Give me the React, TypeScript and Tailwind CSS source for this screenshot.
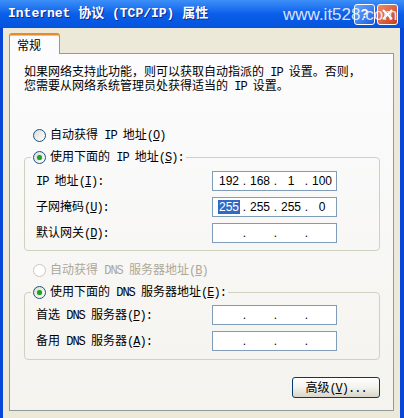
import React from 'react';

const LAT = "font-['Liberation_Mono',monospace] text-[12px] tracking-[-1px]";

// splits a label into CJK / latin runs; "&X" underlines X (mnemonic)
const Mixed: React.FC<{ text: string }> = ({ text }) => {
  const out: React.ReactNode[] = [];
  let buf = '';
  let lat = false;
  let k = 0;
  const flush = () => {
    if (!buf) return;
    out.push(
      <span key={k++} className={lat ? LAT : ''}>
        {buf}
      </span>
    );
    buf = '';
  };
  for (let i = 0; i < text.length; i++) {
    const ch = text[i];
    if (ch === '&') {
      flush();
      out.push(
        <span key={k++} className={`${LAT} underline`}>
          {text[i + 1]}
        </span>
      );
      i++;
      continue;
    }
    const isLat = ch.charCodeAt(0) < 128;
    if (isLat !== lat) {
      flush();
      lat = isLat;
    }
    buf += ch;
  }
  flush();
  return <span className="whitespace-pre">{out}</span>;
};

const Radio: React.FC<{ checked?: boolean; disabled?: boolean }> = ({ checked, disabled }) => (
  <span
    className={`w-[13px] h-[13px] shrink-0 rounded-full border flex items-center justify-center ${
      disabled ? 'border-[#cac8bb] bg-white' : 'border-[#1c5180] bg-gradient-to-br from-[#dcdcd7] to-white'
    }`}
  >
    {checked && <span className="w-[5px] h-[5px] rounded-full bg-[#21a121] shadow-[0_0_1px_#5fd35f]" />}
  </span>
);

const IpBox: React.FC<{ parts?: string[]; selectFirst?: boolean }> = ({ parts = ['', '', '', ''], selectFirst }) => (
  <div className="w-[125px] h-[20px] border border-[#7f9db9] bg-white flex items-center pl-[4px] font-['Liberation_Sans',sans-serif] text-[12px] leading-[14px]">
    {parts.map((p, i) => (
      <React.Fragment key={i}>
        <span className="w-[24px] text-center">
          {selectFirst && i === 0 ? <span className="bg-[#316ac5] text-white px-px">{p}</span> : p}
        </span>
        {i < 3 && <span className="w-[7px] text-center">.</span>}
      </React.Fragment>
    ))}
  </div>
);

const Row: React.FC<{ label: string; children: React.ReactNode }> = ({ label, children }) => (
  <div className="h-[20px] flex items-center">
    <span className="w-[176px]">
      <Mixed text={label} />
    </span>
    {children}
  </div>
);

export default function App() {
  return (
    <div className="w-[404px] h-[418px] bg-[#0846d8] flex flex-col overflow-hidden font-['Noto_Sans_CJK_SC',sans-serif]">
      {/* title bar */}
      <div className="relative h-[28px] shrink-0 bg-gradient-to-b from-[#3d8ff8] via-[#0a5ee9] to-[#0553dc] flex items-center pl-[8px] pr-[6px]">
        <span className="text-white font-bold text-[13px] font-['Liberation_Mono','Noto_Sans_CJK_SC',monospace] [text-shadow:1px_1px_#0c2a8f] whitespace-pre">
          Internet 协议 (TCP/IP) 属性
        </span>
        <div className="ml-auto flex gap-[2px]">
          <div className="w-[21px] h-[21px] rounded-[3px] border border-white bg-gradient-to-br from-[#6aa6ff] to-[#1d5ce0] flex items-center justify-center text-white font-bold text-[13px] font-['Liberation_Sans',sans-serif]">
            ?
          </div>
          <div className="w-[21px] h-[21px] rounded-[3px] border border-white bg-gradient-to-br from-[#ee8a68] to-[#c63d1a] flex items-center justify-center">
            <svg width="11" height="11" viewBox="0 0 11 11">
              <path d="M1.5 1.5 L9.5 9.5 M9.5 1.5 L1.5 9.5" stroke="white" strokeWidth="2" strokeLinecap="round" />
            </svg>
          </div>
        </div>
        <span className="absolute left-[283px] top-[2px] text-[17px] font-['Liberation_Sans',sans-serif] text-[#f0f5ff]/90 whitespace-nowrap">
          www.it528.com
        </span>
      </div>

      {/* body */}
      <div className="flex-1 ml-[3px] mr-[4px] bg-[#ece9d8] pt-[5px] px-[6px] flex flex-col">
        <div className="relative z-10 -mb-px w-[51px] h-[21px] bg-[#fcfcfe] border-x border-[#919b9c] border-t-[2px] border-t-[#e68b2c] shadow-[inset_0_1px_#ffc73c] rounded-t-[3px] pl-[7px] pt-[1px] text-[12px] leading-[17px] text-black">
          常规
        </div>

        <div className="h-[358px] border border-[#919b9c] bg-gradient-to-b from-[#fcfcfe] to-[#f4f3ee] pl-[14px] pr-[13px] flex flex-col text-[12px] leading-[14px] text-black">
          <div className="mt-[11px] flex flex-col">
            <div className="h-[14px] flex items-center">
              <Mixed text="如果网络支持此功能，则可以获取自动指派的 IP 设置。否则，" />
            </div>
            <div className="h-[14px] flex items-center">
              <Mixed text="您需要从网络系统管理员处获得适当的 IP 设置。" />
            </div>
          </div>

          <div className="mt-[35px] ml-[9px] h-[14px] flex items-center gap-[4px]">
            <Radio />
            <Mixed text="自动获得 IP 地址(&O)" />
          </div>

          <fieldset className="mt-[8px] border border-[#d0d0bf] rounded-[4px]">
            <legend className="ml-[6px] px-[2px]">
              <span className="h-[14px] flex items-center gap-[4px]">
                <Radio checked />
                <Mixed text="使用下面的 IP 地址(&S):" />
              </span>
            </legend>
            <div className="pl-[11px] pt-[7px] pb-[7px] flex flex-col gap-[6px]">
              <Row label="IP 地址(&I):">
                <IpBox parts={['192', '168', '1', '100']} />
              </Row>
              <Row label="子网掩码(&U):">
                <IpBox parts={['255', '255', '255', '0']} selectFirst />
              </Row>
              <Row label="默认网关(&D):">
                <IpBox />
              </Row>
            </div>
          </fieldset>

          <div className="mt-[12px] ml-[9px] h-[14px] flex items-center gap-[4px] text-[#aca899]">
            <Radio disabled />
            <Mixed text="自动获得 DNS 服务器地址(&B)" />
          </div>

          <fieldset className="mt-[8px] border border-[#d0d0bf] rounded-[4px]">
            <legend className="ml-[6px] px-[2px]">
              <span className="h-[14px] flex items-center gap-[4px]">
                <Radio checked />
                <Mixed text="使用下面的 DNS 服务器地址(&E):" />
              </span>
            </legend>
            <div className="pl-[11px] pt-[6px] pb-[8px] flex flex-col gap-[6px]">
              <Row label="首选 DNS 服务器(&P):">
                <IpBox />
              </Row>
              <Row label="备用 DNS 服务器(&A):">
                <IpBox />
              </Row>
            </div>
          </fieldset>

          <button className="self-end mt-[17px] w-[88px] h-[21px] rounded-[3px] border border-[#003c74] bg-gradient-to-b from-white via-[#f3f2ec] to-[#d9d5c8] flex items-center justify-center text-[12px] leading-[14px] text-black">
            <Mixed text="高级(&V)..." />
          </button>
        </div>
      </div>
    </div>
  );
}
